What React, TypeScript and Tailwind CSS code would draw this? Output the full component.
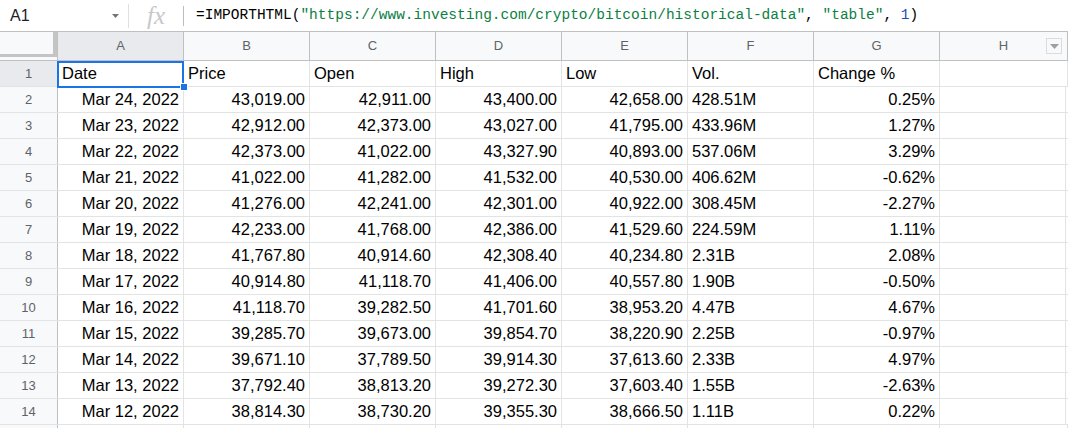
import React from "react";

const cols = ["A", "B", "C", "D", "E", "F", "G", "H"];

type Row = [string, string, string, string, string, string, string];

const data: Row[] = [
  ["Mar 24, 2022", "43,019.00", "42,911.00", "43,400.00", "42,658.00", "428.51M", "0.25%"],
  ["Mar 23, 2022", "42,912.00", "42,373.00", "43,027.00", "41,795.00", "433.96M", "1.27%"],
  ["Mar 22, 2022", "42,373.00", "41,022.00", "43,327.90", "40,893.00", "537.06M", "3.29%"],
  ["Mar 21, 2022", "41,022.00", "41,282.00", "41,532.00", "40,530.00", "406.62M", "-0.62%"],
  ["Mar 20, 2022", "41,276.00", "42,241.00", "42,301.00", "40,922.00", "308.45M", "-2.27%"],
  ["Mar 19, 2022", "42,233.00", "41,768.00", "42,386.00", "41,529.60", "224.59M", "1.11%"],
  ["Mar 18, 2022", "41,767.80", "40,914.60", "42,308.40", "40,234.80", "2.31B", "2.08%"],
  ["Mar 17, 2022", "40,914.80", "41,118.70", "41,406.00", "40,557.80", "1.90B", "-0.50%"],
  ["Mar 16, 2022", "41,118.70", "39,282.50", "41,701.60", "38,953.20", "4.47B", "4.67%"],
  ["Mar 15, 2022", "39,285.70", "39,673.00", "39,854.70", "38,220.90", "2.25B", "-0.97%"],
  ["Mar 14, 2022", "39,671.10", "37,789.50", "39,914.30", "37,613.60", "2.33B", "4.97%"],
  ["Mar 13, 2022", "37,792.40", "38,813.20", "39,272.30", "37,603.40", "1.55B", "-2.63%"],
  ["Mar 12, 2022", "38,814.30", "38,730.20", "39,355.30", "38,666.50", "1.11B", "0.22%"],
];

const headers = ["Date", "Price", "Open", "High", "Low", "Vol.", "Change %"];

function RowHeader({ n, selected }: { n?: number; selected?: boolean }) {
  return (
    <div
      className={`flex h-full w-[58px] shrink-0 items-center justify-center border-r border-[#c0c0c0] text-[13px] text-[#5f6368] ${
        selected ? "bg-[#e8eaed]" : "bg-[#f8f9fa]"
      }`}
    >
      {n}
    </div>
  );
}

function Cell({
  children,
  right,
  last,
}: {
  children?: React.ReactNode;
  right?: boolean;
  last?: boolean;
}) {
  return (
    <div
      className={`flex h-full items-center overflow-hidden whitespace-nowrap border-r border-[#e2e3e3] px-[4px] ${
        last ? "min-w-0 flex-1" : "w-[126px] shrink-0"
      } ${right ? "justify-end" : "justify-start"}`}
    >
      {children}
    </div>
  );
}

export default function App() {
  return (
    <div
      className="h-[428px] w-[1068px] overflow-hidden bg-white text-black"
      style={{ fontFamily: '"Liberation Sans", Arial, sans-serif' }}
    >
      {/* Formula bar */}
      <div className="flex h-[32px] items-center border-b border-[#c0c0c0]">
        <div className="flex h-full w-[128px] shrink-0 items-center justify-between pl-[10px] pr-[9px]">
          <span className="text-[16px] text-[#202124]">A1</span>
          <svg width="7" height="4" viewBox="0 0 7 4">
            <path d="M0 0 L7 0 L3.5 4 Z" fill="#757575" />
          </svg>
        </div>
        <div className="h-[24px] w-px bg-[#e0e0e0]" />
        <div
          className="flex w-[54px] shrink-0 items-center justify-center text-[25px] italic leading-none text-[#c8c8c8]"
          style={{ fontFamily: '"Liberation Serif", "Times New Roman", serif' }}
        >
          fx
        </div>
        <div className="h-[20px] w-px bg-[#bdbdbd]" />
        <div
          className="whitespace-nowrap pl-[12px] pt-[1px] text-[14.5px]"
          style={{ fontFamily: '"Liberation Mono", "DejaVu Sans Mono", monospace' }}
        >
          <span className="text-black">=IMPORTHTML(</span>
          <span className="text-[#0b8043]">"https://www.investing.com/crypto/bitcoin/historical-data"</span>
          <span className="text-black">, </span>
          <span className="text-[#0b8043]">"table"</span>
          <span className="text-black">, </span>
          <span className="text-[#1c4fb3]">1</span>
          <span className="text-black">)</span>
        </div>
      </div>

      {/* Column headers */}
      <div className="flex h-[29px] border-b border-[#c0c0c0] bg-[#f8f9fa] text-[13px] text-[#5f6368]">
        <div className="h-full w-[58px] shrink-0 border-r border-[#c0c0c0]">
          <div className="h-[25px] w-[57px] border-b-[3px] border-r-[4px] border-[#c4c4c4]" />
        </div>
        {cols.map((c, i) => (
          <div
            key={c}
            className={`relative flex h-full items-center justify-center border-r border-[#c0c0c0] ${
              i === 7 ? "min-w-0 flex-1" : "w-[126px] shrink-0"
            } ${i === 0 ? "bg-[#e8eaed]" : ""}`}
          >
            {c}
            {c === "H" && (
              <div className="absolute right-[5px] top-[6px] flex h-[16px] w-[16px] items-center justify-center border border-[#dadce0] bg-[#f8f9fa]">
                <svg width="9" height="5" viewBox="0 0 9 5">
                  <path d="M0 0 L9 0 L4.5 5 Z" fill="#9aa0a6" />
                </svg>
              </div>
            )}
          </div>
        ))}
      </div>

      {/* Row 1 */}
      <div className="flex h-[26px] border-b border-[#e2e3e3] text-[16.5px]">
        <RowHeader n={1} selected />
        <div className="relative flex h-full w-[126px] shrink-0 items-center border-r border-[#e2e3e3] px-[4px]">
          Date
          <div className="pointer-events-none absolute bottom-[-2px] left-[-1px] right-[-1px] top-0 z-10 border-2 border-[#1a73e8]" />
          <div className="absolute bottom-[-5px] right-[-5px] z-20 h-[8px] w-[8px] border border-white bg-[#1a73e8]" />
        </div>
        {headers.slice(1).map((h) => (
          <Cell key={h}>{h}</Cell>
        ))}
        <Cell last />
      </div>

      {data.map((r, i) => (
        <div key={i} className="flex h-[26px] border-b border-[#e2e3e3] text-[16.5px]">
          <RowHeader n={i + 2} />
          {r.map((v, j) => (
            <Cell key={j} right={j !== 5}>
              {v}
            </Cell>
          ))}
          <Cell />
          <Cell last />
        </div>
      ))}

      <div className="flex h-[26px] border-b border-[#e2e3e3] text-[16.5px]">
        <RowHeader />
        {Array.from({ length: 7 }).map((_, j) => (
          <Cell key={j} />
        ))}
        <Cell last />
      </div>
    </div>
  );
}
